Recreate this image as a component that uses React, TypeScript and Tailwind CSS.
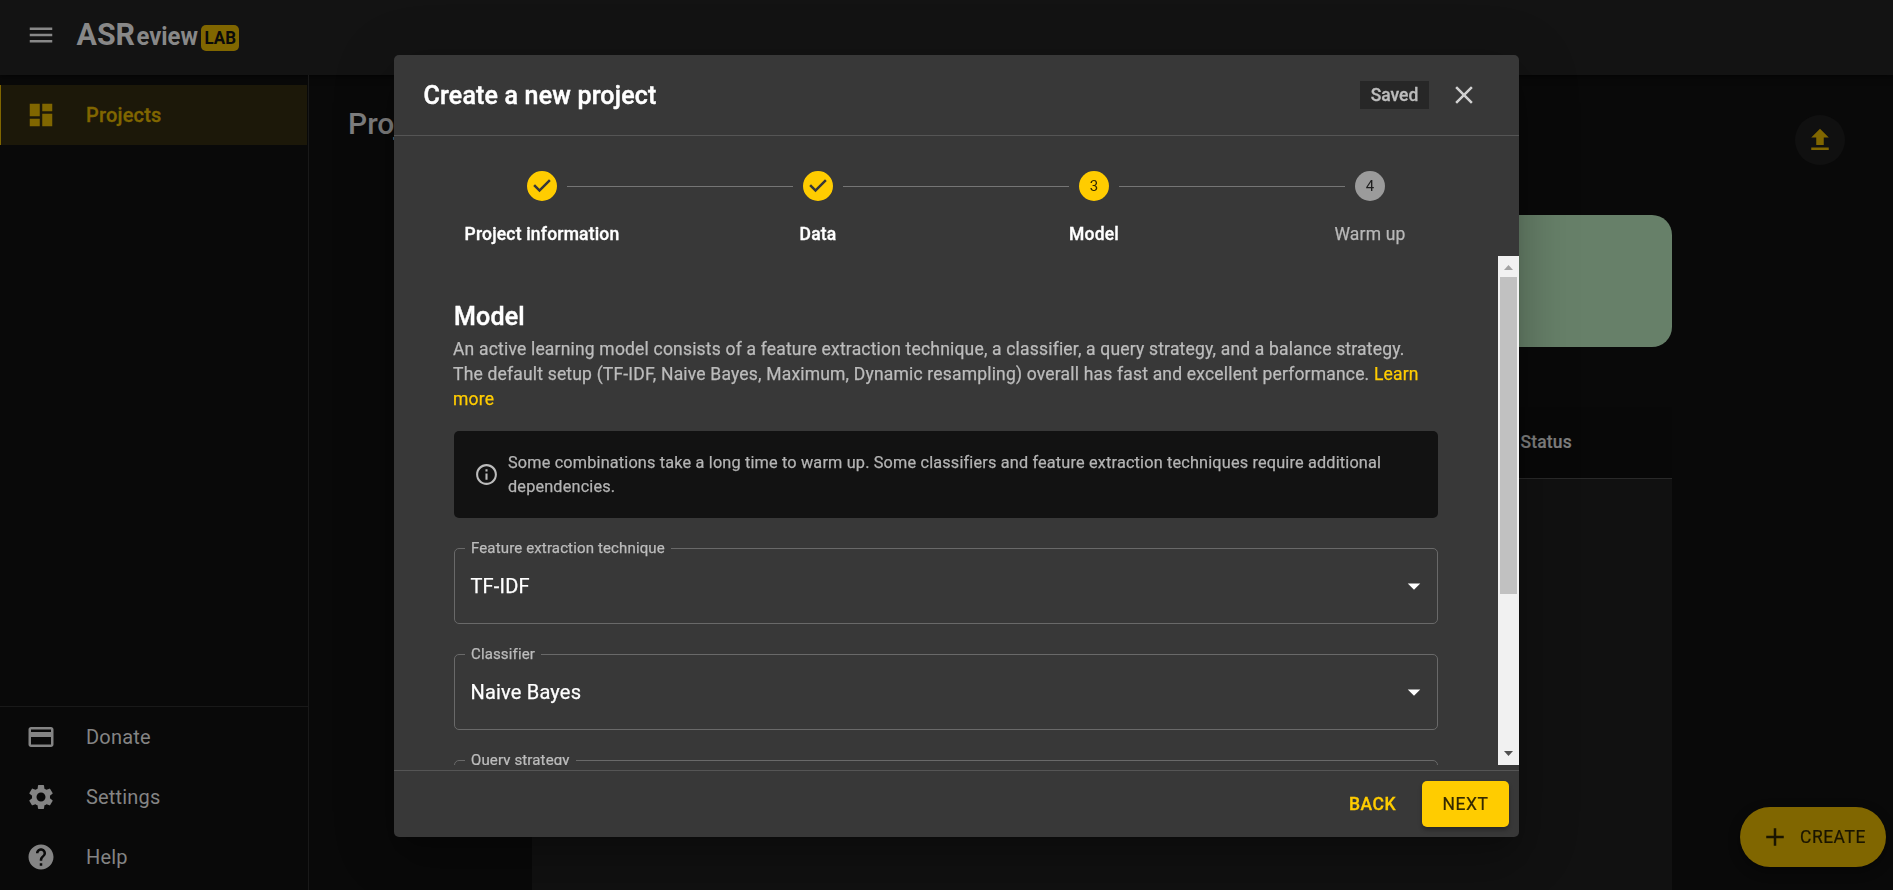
import type { ReactNode } from "react";
import {
  MdAdd,
  MdArrowDropDown,
  MdClose,
  MdDashboard,
  MdFileUpload,
  MdHelp,
  MdInfoOutline,
  MdMenu,
  MdPayment,
  MdSettings,
} from "react-icons/md";

function Logo() {
  return (
    <svg width="164" height="36" viewBox="0 0 164 36" className="ml-[9px] overflow-visible" aria-label="ASReview LAB">
      <g fontFamily="Roboto, sans-serif" fontWeight="700" fill="#888888">
        <text x="-0.5" y="27.5" fontSize="31.5" textLength="58.5" lengthAdjust="spacingAndGlyphs">
          ASR
        </text>
        <text x="59.5" y="27.5" fontSize="25" textLength="61.5" lengthAdjust="spacingAndGlyphs">
          eview
        </text>
      </g>
      <rect x="124" y="8" width="38" height="26" rx="5" fill="#806600" />
      <text
        x="127.5"
        y="27"
        fontFamily="Roboto, sans-serif"
        fontWeight="700"
        fontSize="19"
        textLength="31.5"
        lengthAdjust="spacingAndGlyphs"
        fill="#0a0a0a"
      >
        LAB
      </text>
    </svg>
  );
}

function NavItem({ icon, label, selected = false }: { icon: ReactNode; label: string; selected?: boolean }) {
  return (
    <div
      className={
        selected
          ? "flex h-[60px] w-[307px] items-center border-l border-[#806600] bg-[#1c1809] pl-[25px] text-[20px] font-medium text-[#806600] [-webkit-text-stroke:0.3px]"
          : "flex h-[60px] w-[307px] items-center pl-[26px] text-[20px] text-[#848484]"
      }
    >
      <span className="w-[60px] text-[30px]">{icon}</span>
      <span className="tracking-[0.00938em]">{label}</span>
    </div>
  );
}

type StepState = "done" | "active" | "pending";

function Step({ label, state, index }: { label: string; state: StepState; index: number }) {
  return (
    <div className="flex w-[276px] flex-col items-center">
      <div className="flex h-[30px] w-full items-center justify-between">
        <span className={index > 1 ? "h-px w-[113px] bg-[#757575]" : "h-px w-[113px]"} />
        <svg width="30" height="30" viewBox="0 0 24 24">
          {state === "done" ? (
            <path
              fill="#ffcc00"
              d="M12 0a12 12 0 1 0 0 24 12 12 0 0 0 0-24zm-2 17l-5-5 1.4-1.4 3.6 3.6 7.6-7.6L19 8l-9 9z"
            />
          ) : (
            <>
              <circle cx="12" cy="12" r="12" fill={state === "active" ? "#ffcc00" : "#9b9b9b"} />
              <text
                x="12"
                y="16"
                textAnchor="middle"
                fontSize="12"
                fontFamily="Roboto, sans-serif"
                strokeWidth="0"
                fill={state === "active" ? "#332900" : "#1f1f1f"}
              >
                {index}
              </text>
            </>
          )}
        </svg>
        <span className={index < 4 ? "h-px w-[113px] bg-[#757575]" : "h-px w-[113px]"} />
      </div>
      <span
        className={
          state === "pending"
            ? "mt-[21px] text-[17.5px] leading-[25px] tracking-[0.01071em] text-[#b8b8b8] [-webkit-text-stroke:0.25px]"
            : "mt-[21px] text-[17.5px] leading-[25px] font-medium tracking-[0.01071em] text-white [-webkit-text-stroke:0.35px]"
        }
      >
        {label}
      </span>
    </div>
  );
}

function SelectField({ label, value }: { label: string; value: string }) {
  return (
    <fieldset className="mb-[19px] h-[87px] shrink-0 rounded-[5px] border border-[#696969] pl-[10px]">
      <legend className="px-[6px] text-[15px] leading-[22px] tracking-[0.00938em] text-[#bcbcbc] [-webkit-text-stroke:0.25px]">
        {label}
      </legend>
      <div className="flex h-[54px] items-center justify-between pr-[8px] pl-[5.5px]">
        <span className="text-[20px] tracking-[0.00938em] text-white [-webkit-text-stroke:0.25px]">{value}</span>
        <MdArrowDropDown className="text-[30px] text-white" />
      </div>
    </fieldset>
  );
}

function Scrollbar() {
  return (
    <div className="flex w-[21px] flex-col items-center bg-[#f1f1f1]">
      <svg width="21" height="21" className="shrink-0">
        <path d="M6 14h9l-4.5-5z" fill="#a3a3a3" />
      </svg>
      <div className="h-[317px] w-[17px] bg-[#c1c1c1]" />
      <svg width="21" height="21" className="mt-auto shrink-0">
        <path d="M6 7h9l-4.5 5z" fill="#505050" />
      </svg>
    </div>
  );
}

function ProjectDialog() {
  return (
    <div className="flex h-[782px] w-[1125px] flex-col overflow-hidden rounded-[5px] bg-[#383838] shadow-[0_14px_19px_-9px_rgba(0,0,0,0.2),0_30px_48px_4px_rgba(0,0,0,0.14),0_11px_58px_10px_rgba(0,0,0,0.12)]">
      <header className="flex h-[81px] shrink-0 items-center border-b border-[#555555] pl-[29.5px]">
        <h2 className="pt-0.5 text-[25px] font-medium tracking-[0.0075em] text-white [-webkit-text-stroke:0.45px]">
          Create a new project
        </h2>
        <span className="ml-auto flex h-7 w-[69px] items-center justify-center bg-[#272727] text-[17.5px] font-medium text-[#bcbcbc] [-webkit-text-stroke:0.3px]">
          Saved
        </span>
        <MdClose className="mr-10 ml-5 text-[30px] text-[#cfcfcf]" />
      </header>

      <div className="flex h-[120px] shrink-0 pt-[35px] pl-[10px]">
        <Step index={1} state="done" label="Project information" />
        <Step index={2} state="done" label="Data" />
        <Step index={3} state="active" label="Model" />
        <Step index={4} state="pending" label="Warm up" />
      </div>

      <div className="flex h-[509px] shrink-0">
        <div className="flex flex-1 flex-col overflow-hidden px-[60px] pt-[41px]">
          <h3 className="text-[25px] leading-10 font-medium tracking-[0.0075em] text-white [-webkit-text-stroke:0.45px]">
            Model
          </h3>
          <p className="-ml-px text-[17.5px] leading-[25px] tracking-[0.01071em] text-[#bcbcbc] [-webkit-text-stroke:0.25px]">
            An active learning model consists of a feature extraction technique, a classifier, a query strategy, and a
            balance strategy. The default setup (TF-IDF, Naive Bayes, Maximum, Dynamic resampling) overall has fast and
            excellent performance. <a className="text-[#ffcc00]">Learn more</a>
          </p>
          <div className="mt-[19px] mb-[19px] flex h-[87px] shrink-0 items-center rounded-[5px] bg-[#121212] pr-5 pl-5">
            <MdInfoOutline className="shrink-0 text-[25px] text-[#bcbcbc]" />
            <p className="ml-[9px] text-[16.25px] leading-6 tracking-[0.01071em] text-[#b4b4b4] [-webkit-text-stroke:0.25px]">
              Some combinations take a long time to warm up. Some classifiers and feature extraction techniques require
              additional dependencies.
            </p>
          </div>
          <SelectField label="Feature extraction technique" value="TF-IDF" />
          <SelectField label="Classifier" value="Naive Bayes" />
          <SelectField label="Query strategy" value="Maximum" />
        </div>
        <Scrollbar />
      </div>

      <footer className="mt-[5px] flex flex-1 items-center justify-end border-t border-[#555555] pr-[10px] text-[17.5px] tracking-[0.02857em]">
        <button className="mr-[26px] font-medium text-[#ffcc00] [-webkit-text-stroke:0.3px]">BACK</button>
        <button className="h-[46px] w-[87px] rounded-[5px] bg-[#ffcc00] text-[#332900] shadow-[0_3px_4px_rgba(0,0,0,0.3)] [-webkit-text-stroke:0.2px]">
          NEXT
        </button>
      </footer>
    </div>
  );
}

export default function App() {
  return (
    <div className="flex h-[890px] w-[1893px] flex-col overflow-hidden bg-[#090909] font-[Roboto,sans-serif]">
      <header className="flex h-[75px] shrink-0 items-center bg-[#131313] pb-[5px] pl-[26px] shadow-[0_2px_6px_rgba(0,0,0,0.5)]">
        <MdMenu className="text-[30px] text-[#888888]" />
        <span className="ml-3">
          <Logo />
        </span>
      </header>

      <div className="flex min-h-0 flex-1">
        <nav className="flex w-[309px] shrink-0 flex-col border-r border-[#191919] pt-[10px]">
          <NavItem icon={<MdDashboard />} label="Projects" selected />
          <div className="mt-auto border-t border-[#191919] pb-[3px]">
            <NavItem icon={<MdPayment />} label="Donate" />
            <NavItem icon={<MdSettings />} label="Settings" />
            <NavItem icon={<MdHelp />} label="Help" />
          </div>
        </nav>

        <main className="flex flex-1 flex-col">
          <div className="flex h-[140px] shrink-0 items-start justify-between pr-12 pl-[39px]">
            <h1 className="mt-[29px] text-[30px] leading-[40px] font-medium text-[#7f7f7f]">Projects</h1>
            <span className="mt-10 flex size-[50px] items-center justify-center rounded-full bg-[#101010]">
              <MdFileUpload className="text-[30px] text-[#806600]" />
            </span>
          </div>
          <div className="ml-[223px] h-[132px] w-[1140px] shrink-0 rounded-[20px] bg-[#678069]" />
          <section className="mt-[60px] ml-[223px] flex w-[1140px] flex-1 flex-col bg-[#111111]">
            <div className="flex h-[72px] items-center justify-end border-b border-[#292929] bg-[#080808] pr-[100px] text-[17.5px] font-medium tracking-[0.01071em] text-[#7f7f7f] [-webkit-text-stroke:0.2px]">
              Status
            </div>
          </section>
        </main>
      </div>

      <button className="fixed right-[7px] bottom-[23px] flex h-[60px] w-[146px] items-center rounded-full bg-[#806600] pl-5 text-[17.5px] tracking-[0.02857em] text-[#1a1500] shadow-[0_4px_12px_rgba(0,0,0,0.4)] [-webkit-text-stroke:0.2px]">
        <MdAdd className="mr-[10px] text-[30px]" />
        CREATE
      </button>

      <div className="fixed inset-0 flex items-start pt-[55px] pl-[394px]">
        <ProjectDialog />
      </div>
    </div>
  );
}
